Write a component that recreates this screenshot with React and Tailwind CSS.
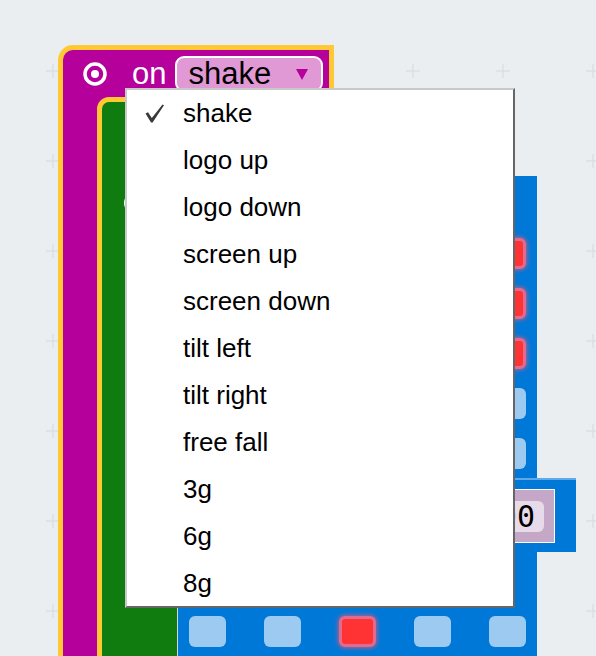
import React from "react";

const items = [
  "shake",
  "logo up",
  "logo down",
  "screen up",
  "screen down",
  "tilt left",
  "tilt right",
  "free fall",
  "3g",
  "6g",
  "8g",
];

function Led({ on }) {
  return on ? (
    <div className="w-[37px] h-[31px] rounded-[6px] bg-[#ff3333] border-[3px] border-[#e26a8e] shadow-[0_0_4px_1px_rgba(255,90,110,0.7)]" />
  ) : (
    <div className="w-[37px] h-[31px] rounded-[6px] bg-[#9dcaf0]" />
  );
}

const grid1 = [
  [0, 1, 0, 1, 1],
  [1, 0, 1, 0, 1],
  [0, 1, 0, 1, 1],
  [1, 0, 0, 0, 0],
  [0, 1, 1, 1, 0],
];

export default function App() {
  const font = { fontFamily: '"Liberation Sans", Arial, sans-serif' };
  return (
    <div className="relative w-[596px] h-[656px] overflow-hidden bg-[#eaeef0]" style={font}>
      {/* workspace grid */}
      <svg className="absolute inset-0" width="596" height="656">
        <defs>
          <pattern id="g" x="-37" y="-19" width="90" height="90" patternUnits="userSpaceOnUse">
            <path d="M83 90 H97 M90 83 V97 M-7 0 H7 M0 -7 V7 M83 0 H97 M90 -7 V7 M-7 90 H7 M0 83 V97" stroke="#d5d9dc" strokeWidth="1" />
          </pattern>
        </defs>
        <rect width="596" height="656" fill="url(#g)" />
      </svg>

      {/* magenta event block */}
      <div className="absolute left-[58px] top-[45px] w-[276px] h-[700px] bg-[#b5009c] border-[5px] border-[#ffc933] rounded-tl-[15px]">
        <div className="flex items-center pt-[6px] pl-[20px] h-[42px]">
          <svg width="24" height="24" viewBox="0 0 24 24" className="shrink-0">
            <circle cx="12" cy="12" r="10" fill="none" stroke="#fff" strokeWidth="3.5" />
            <circle cx="12" cy="12" r="4" fill="#fff" />
          </svg>
          <span className="ml-[25px] text-white text-[31px] leading-[31px] pb-[2px]">on</span>
          <div className="ml-[9px] w-[148px] h-[36px] flex items-center justify-between rounded-[9px] border-2 border-white bg-[#e199d6] pl-[11px] pr-[13px]">
            <span className="text-black text-[31px] leading-[31px] pb-[2px]">shake</span>
            <svg width="12" height="11" viewBox="0 0 12 11">
              <polygon points="0,0 12,0 6,11" fill="#b5009c" />
            </svg>
          </div>
        </div>
      </div>

      {/* green block */}
      <div className="absolute left-[97px] top-[97px] w-[300px] h-[700px] bg-[#107c10] border-[5px] border-[#ffc933] rounded-tl-[12px]">
        <div className="absolute left-[22px] top-[90px] w-[22px] h-[22px] rounded-full border-[3px] border-white" />
      </div>

      {/* blue show leds block */}
      <div className="absolute left-[177px] top-[176px] w-[360px] h-[302px] bg-[#0078d7] border-l border-[#cfd6dc]">
        <div className="grid grid-cols-[repeat(5,37px)] gap-x-[38px] gap-y-[19px] pl-[11px] pt-[62px]">
          {grid1.flat().map((v, i) => (
            <Led key={i} on={v === 1} />
          ))}
        </div>
      </div>

      {/* blue block with number field */}
      <div className="absolute left-[177px] top-[478px] w-[399px] h-[74px] bg-[#0078d7] border-t-2 border-[#5ea9e8] border-l border-l-[#cfd6dc] flex items-center justify-end pr-[21px]">
        <div className="flex items-center h-[54px] pl-[10px] pr-[10px] bg-[#c5a8c8] border border-white">
          <div className="flex items-center h-[31px] rounded-[6px] bg-[#e8dbe9] pl-[8px] pr-[9px]">
            <span className="text-black text-[30px] leading-[31px]" style={{ fontFamily: '"DejaVu Sans Mono", "Liberation Mono", monospace' }}>
              100
            </span>
          </div>
        </div>
      </div>

      {/* blue block lower */}
      <div className="absolute left-[177px] top-[552px] w-[360px] h-[200px] bg-[#0078d7] border-l border-[#cfd6dc]">
        <div className="flex gap-x-[38px] pl-[11px] pt-[64px]">
          <Led on={false} />
          <Led on={false} />
          <Led on={true} />
          <Led on={false} />
          <Led on={false} />
        </div>
      </div>

      {/* dropdown menu */}
      <div className="absolute left-[125px] top-[88px] w-[390px] h-[520px] bg-white border-2 border-t-[#c9c9c9] border-l-[#c9c9c9] border-r-[#666666] border-b-[#666666]">
        {items.map((it, i) => (
          <div key={it} className="relative h-[47px] flex items-center pl-[56px] text-[26px] text-black">
            {i === 0 && (
              <svg className="absolute left-[18px] top-[14px]" width="20" height="20" viewBox="0 0 20 20">
                <path d="M0.5 9.5 L3 8.2 L6.8 14 L17.5 0.5 L19 1.3 L7.6 18.5 L6 18.5 Z" fill="#3a3a3a" />
              </svg>
            )}
            <span>{it}</span>
          </div>
        ))}
      </div>
    </div>
  );
}
